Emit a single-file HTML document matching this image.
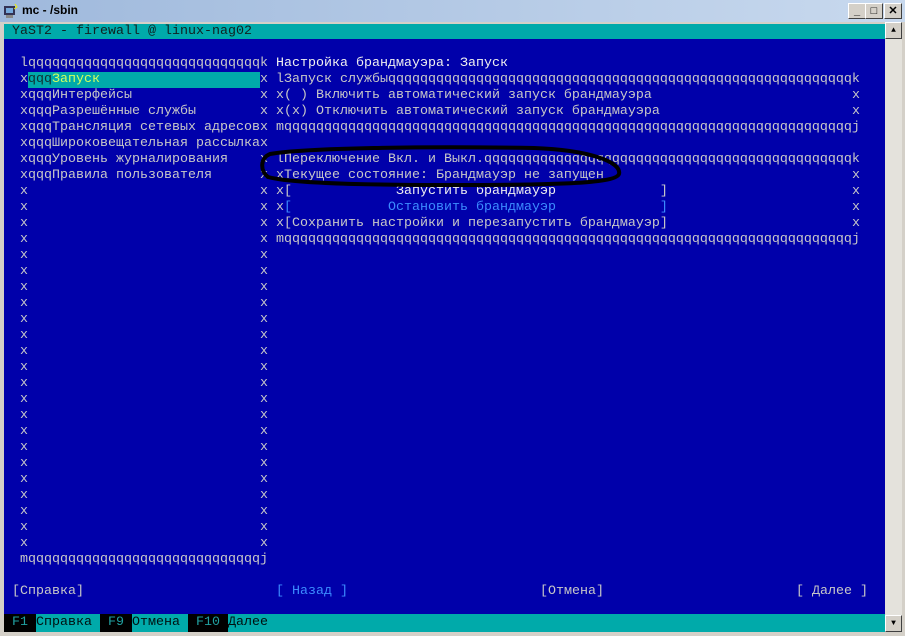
<!DOCTYPE html>
<html><head><meta charset="utf-8"><style>
body{margin:0;width:905px;height:636px;background:#d4d0c8;position:relative;overflow:hidden;font-family:"Liberation Mono",monospace}
#tb{position:absolute;left:0;top:0;width:905px;height:22px;background:linear-gradient(90deg,#9fb9dc,#c8d9ee);}
#tb span{position:absolute;left:22px;top:3px;font:bold 12px "Liberation Sans",sans-serif;color:#000}
.btn{position:absolute;top:3px;width:16px;height:14px;background:#d4d0c8;border:1px solid;border-color:#fff #404040 #404040 #fff;font:bold 11px "Liberation Sans",sans-serif;text-align:center;line-height:14px;color:#000}
#term{position:absolute;left:4px;top:24px;width:881px;height:608px;background:#0000aa;overflow:hidden}
.r{position:absolute;left:0;height:16px;line-height:16px;font-size:13.33px;color:#c8c8c8;white-space:pre}
#sb{position:absolute;left:885px;top:22px;width:17px;height:610px;background:#e4e2dc}
.ar{position:absolute;left:0;width:15px;height:15px;background:#d4d0c8;border:1px solid;border-color:#fff #404040 #404040 #fff;font-size:8px;text-align:center;line-height:15px}
</style></head><body>
<div id="tb"><svg style="position:absolute;left:3px;top:3px" width="16" height="16"><rect x="1" y="3" width="11" height="9" fill="#335" /><rect x="3" y="5" width="7" height="5" fill="#7ad"/><rect x="3" y="12" width="7" height="3" fill="#888"/><path d="M12 1 L14 4 L11 6" stroke="#ee0" fill="none"/></svg><span>mc - /sbin</span>
<div class="btn" style="left:848px">_</div><div class="btn" style="left:865px">□</div><div class="btn" style="left:884px">✕</div></div>
<div id="term">
<div style="position:absolute;left:0;top:0;width:881px;height:15px;background:#00aaaa"></div>
<div style="position:absolute;left:24px;top:48px;width:232px;height:16px;background:#00aaaa"></div>
<div style="position:absolute;left:0;top:590px;width:881px;height:18px;background:#00aaaa"></div>
<div style="position:absolute;left:0;top:590px;width:32px;height:18px;background:#000"></div>
<div style="position:absolute;left:96px;top:590px;width:32px;height:18px;background:#000"></div>
<div style="position:absolute;left:184px;top:590px;width:40px;height:18px;background:#000"></div>

<div class="r" style="top:0;left:8px;color:#102020">YaST2 - firewall @ linux-nag02</div>

<div class="r" style="top:32px;left:16px">lqqqqqqqqqqqqqqqqqqqqqqqqqqqqqk</div>
<div class="r" style="top:32px;left:272px;color:#f0f0f0">Настройка брандмауэра: Запуск</div>

<div class="r" style="top:48px;left:16px">x<span style="color:#103030">qqq</span><span style="color:#d0ff60">Запуск</span></div>
<div class="r" style="top:48px;left:256px">x</div>
<div class="r" style="top:48px;left:272px">lЗапуск службыqqqqqqqqqqqqqqqqqqqqqqqqqqqqqqqqqqqqqqqqqqqqqqqqqqqqqqqqqqk</div>

<div class="r" style="top:64px;left:16px">xqqqИнтерфейсы</div><div class="r" style="top:64px;left:256px">x</div>
<div class="r" style="top:64px;left:272px">x( ) Включить автоматический запуск брандмауэра</div><div class="r" style="top:64px;left:848px">x</div>

<div class="r" style="top:80px;left:16px">xqqqРазрешённые службы</div><div class="r" style="top:80px;left:256px">x</div>
<div class="r" style="top:80px;left:272px">x(x) Отключить автоматический запуск брандмауэра</div><div class="r" style="top:80px;left:848px">x</div>

<div class="r" style="top:96px;left:16px">xqqqТрансляция сетевых адресовx</div>
<div class="r" style="top:96px;left:272px">mqqqqqqqqqqqqqqqqqqqqqqqqqqqqqqqqqqqqqqqqqqqqqqqqqqqqqqqqqqqqqqqqqqqqqqqj</div>

<div class="r" style="top:112px;left:16px">xqqqШироковещательная рассылкаx</div>

<div class="r" style="top:128px;left:16px">xqqqУровень журналирования</div><div class="r" style="top:128px;left:256px">x</div>
<div class="r" style="top:128px;left:272px">lПереключение Вкл. и Выкл.qqqqqqqqqqqqqqqqqqqqqqqqqqqqqqqqqqqqqqqqqqqqqqk</div>

<div class="r" style="top:144px;left:16px">xqqqПравила пользователя</div><div class="r" style="top:144px;left:256px">x</div>
<div class="r" style="top:144px;left:272px">xТекущее состояние: Брандмауэр не запущен</div><div class="r" style="top:144px;left:848px">x</div>

<div class="r" style="top:160px;left:272px">x[             <span style="color:#f0f0f0">Запустить брандмауэр</span>             ]</div><div class="r" style="top:160px;left:848px">x</div>
<div class="r" style="top:176px;left:272px">x<span style="color:#3c8cff">[            Остановить брандмауэр             ]</span></div><div class="r" style="top:176px;left:848px">x</div>
<div class="r" style="top:192px;left:272px">x[Сохранить настройки и перезапустить брандмауэр]</div><div class="r" style="top:192px;left:848px">x</div>
<div class="r" style="top:208px;left:272px">mqqqqqqqqqqqqqqqqqqqqqqqqqqqqqqqqqqqqqqqqqqqqqqqqqqqqqqqqqqqqqqqqqqqqqqqj</div>

<div class="r" style="top:160px;left:16px">x
x
x
x
x
x
x
x
x
x
x
x
x
x
x
x
x
x
x
x
x
x
x</div>
<div class="r" style="top:160px;left:256px">x
x
x
x
x
x
x
x
x
x
x
x
x
x
x
x
x
x
x
x
x
x
x</div>
<div class="r" style="top:528px;left:16px">mqqqqqqqqqqqqqqqqqqqqqqqqqqqqqj</div>

<div class="r" style="top:560px;left:8px">[Справка]</div>
<div class="r" style="top:560px;left:272px;color:#3c8cff">[ Назад ]</div>
<div class="r" style="top:560px;left:536px">[Отмена]</div>
<div class="r" style="top:560px;left:792px">[ Далее ]</div>

<div class="r" style="top:591px;left:8px;color:#20a0a0">F1</div>
<div class="r" style="top:591px;left:32px;color:#001010">Справка</div>
<div class="r" style="top:591px;left:104px;color:#20a0a0">F9</div>
<div class="r" style="top:591px;left:128px;color:#001010">Отмена</div>
<div class="r" style="top:591px;left:192px;color:#20a0a0">F10</div>
<div class="r" style="top:591px;left:224px;color:#001010">Далее</div>

<svg style="position:absolute;left:0;top:0" width="881" height="608"><path d="M266 130 C300 124 420 122 530 124 C585 126 618 138 615 150 C612 159 560 161 450 161 C350 161 285 159 264 153 C256 147 256 134 266 130 Z" fill="none" stroke="#000" stroke-width="4"/></svg>
</div>
<div id="sb"><div class="ar" style="top:0">▲</div><div class="ar" style="top:593px">▼</div></div>
</body></html>
